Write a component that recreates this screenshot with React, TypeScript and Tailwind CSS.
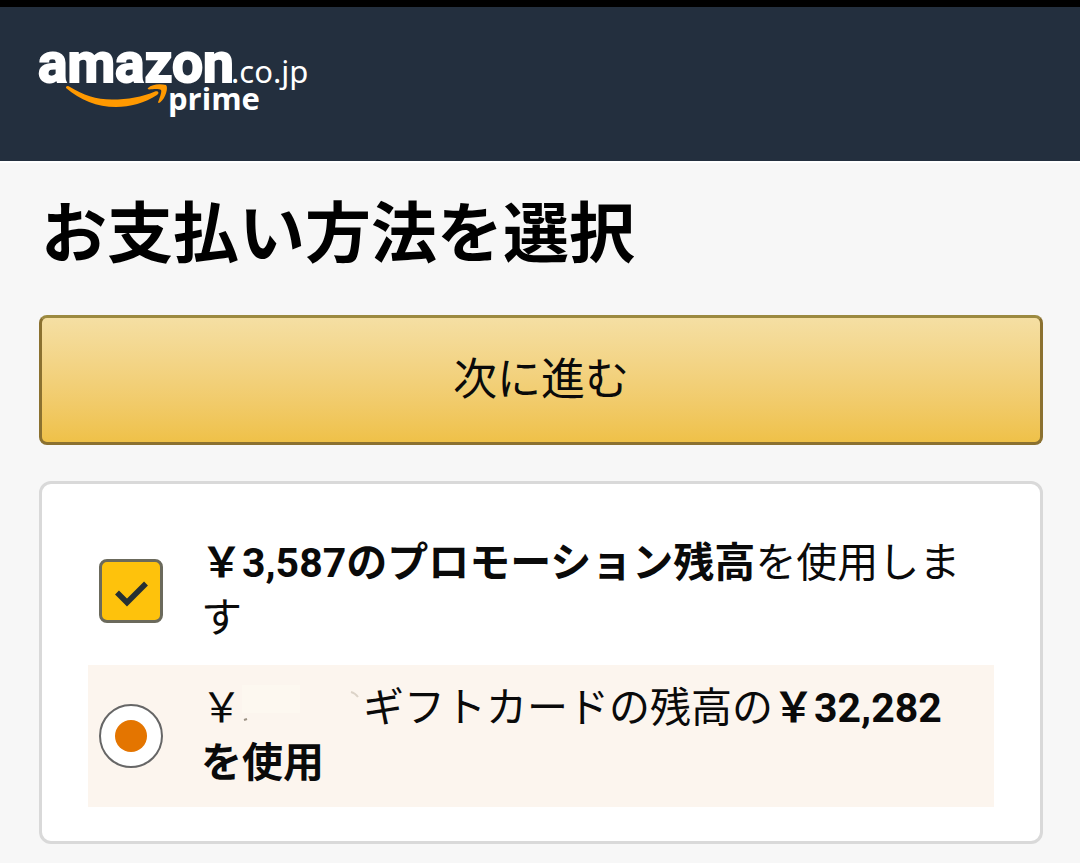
import React, { useState } from "react";

// full-width yen sign
const YEN = "\uffe5";

const Logo = () => (
  <svg
    width="280"
    height="80"
    viewBox="0 0 280 80"
    role="img"
    aria-label="amazon.co.jp prime"
    className="overflow-visible"
  >
    <text
      x="2"
      y="38"
      fill="#ffffff"
      stroke="#ffffff"
      strokeWidth="2"
      className="font-[Roboto,sans-serif] text-[55px] font-bold"
    >
      amazon
    </text>
    <text x="195" y="39" fill="#ffffff" className="font-['Noto_Sans',sans-serif] text-[31px]">
      .co.jp
    </text>
    <text
      x="132"
      y="66"
      fill="#ffffff"
      className="font-['Open_Sans',sans-serif] text-[31px] font-bold"
    >
      prime
    </text>
    <path
      d="M30 43 C31 41.500 32.500 42 34 43 C47 51 60 55.500 76 55.500 C92 55.500 106 53 119 47.500 C122 46.500 124 49 121 51 C109 59 94 63 80 63 C61 63 44 56 30 44 Z"
      fill="#ff9900"
    />
    <path
      d="M112 44 C116 40 124 39.500 130 41 C132.500 43 130 54 124 58.500 C122.500 59.500 121.500 59 122.500 57 C124 53 126 47.500 125 46 C123.500 44.500 117 45 113.500 45.500 C111.500 45.500 111.500 44.500 112 44 Z"
      fill="#ff9900"
    />
  </svg>
);

// the balance is rubbed out, only faint marks are left
const HiddenAmount = () => (
  <svg className="inline-block h-10 w-[121px] align-baseline" viewBox="0 0 121 40" fill="none" aria-hidden="true">
    <rect x="0" y="3" width="58" height="28" fill="#fdf8f0" />
    <path d="M2 38 L5 37" stroke="#9a9184" strokeWidth="2" />
    <path d="M109 10 Q113 11 116 15" stroke="#dcd3c8" strokeWidth="2" />
  </svg>
);

const CheckoutPage = () => {
  const [usePromotion, setUsePromotion] = useState(true);
  const [payment, setPayment] = useState("giftCard");

  return (
    <div className="min-h-screen bg-[#f7f7f7] font-[Roboto,'Noto_Sans_CJK_JP',sans-serif] text-[#0a0a0a]">
      <header className="border-t-[7px] border-b-2 border-t-black border-b-white bg-[#232f3e]">
        <div className="px-9 pt-[37px] pb-[37px]">
          <Logo />
        </div>
      </header>

      <main className="pt-7 pr-[37px] pb-5 pl-[39px]">
        <h1 className="px-0.5 text-[66px] leading-[88px] font-bold text-black">お支払い方法を選択</h1>

        <button
          type="button"
          className="mt-9 block h-[130px] w-full rounded-lg border-[3px] border-[#8b7130] border-t-[#9c8a40] bg-gradient-to-b from-[#f5dfa3] to-[#efc148] text-[44px]"
        >
          次に進む
        </button>

        <section className="mt-9 rounded-xl border-[3px] border-[#d9d9d9] bg-white px-[46px] pt-9 pb-[34px] text-[41px] leading-[55px]">
          <label className="flex items-center gap-[38px] py-4 pr-6 pl-[11px]">
            <span className="relative size-16 shrink-0">
              <input
                type="checkbox"
                checked={usePromotion}
                onChange={(e) => setUsePromotion(e.target.checked)}
                className="block size-16 appearance-none rounded-lg border-[3px] border-[#6b6a5c] bg-white checked:bg-[#fec20c]"
              />
              {usePromotion && (
                <svg className="pointer-events-none absolute inset-0" viewBox="0 0 64 64" fill="none">
                  <path d="M18 33.500 L28 43.500 L47 24.500" stroke="#263034" strokeWidth="5.500" />
                </svg>
              )}
            </span>
            <span>
              <b>{YEN}3,587のプロモーション残高</b>を使用します
            </span>
          </label>

          <label className="mt-[3px] flex items-center gap-[38px] bg-[#fcf5ee] py-4 pr-6 pl-[11px]">
            <span className="relative size-16 shrink-0">
              <input
                type="radio"
                name="payment"
                value="giftCard"
                checked={payment === "giftCard"}
                onChange={(e) => setPayment(e.target.value)}
                className="block size-16 appearance-none rounded-full border-2 border-[#666666] bg-white"
              />
              {payment === "giftCard" && (
                <span className="pointer-events-none absolute inset-4 rounded-full bg-[#e47500]" />
              )}
            </span>
            <span>
              {YEN}
              <HiddenAmount />
              ギフトカードの残高の<b>{YEN}32,282を使用</b>
            </span>
          </label>
        </section>
      </main>
    </div>
  );
};

export default CheckoutPage;
